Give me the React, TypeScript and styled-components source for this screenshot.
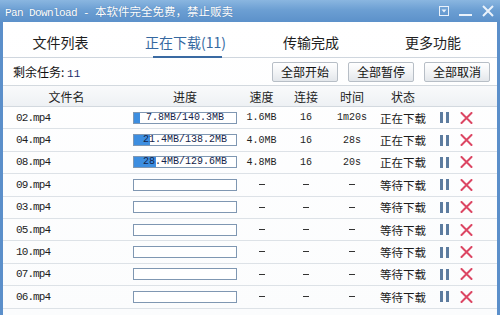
import React from 'react'
import styled, { createGlobalStyle, css } from 'styled-components'

const GlobalStyle = createGlobalStyle`
  html, body {
    margin: 0;
    padding: 0;
    background: #ffffff;
  }
  body {
    font-family: "Noto Sans CJK SC", "Liberation Sans", sans-serif;
  }
`

const CJK = `"Noto Sans CJK SC", "Liberation Sans", sans-serif`
const MONO = `"Liberation Mono", "Noto Sans CJK SC", monospace`

const COLUMNS = '127px 110px 43px 46px 46px 56px 1fr'

const Window = styled.div`
  width: 500px;
  height: 315px;
  display: flex;
  flex-direction: column;
  overflow: hidden;
  background: #ffffff;
`

const TitleBar = styled.div`
  height: 22px;
  flex: none;
  display: flex;
  align-items: center;
  justify-content: space-between;
  padding: 0 6px 0 5px;
  background: linear-gradient(180deg, #8ab6e0 0%, #6c9fd3 45%, #5c91ca 100%);
  color: #ffffff;
`

const TitleText = styled.div`
  font-family: ${MONO};
  font-size: 11px;
  letter-spacing: -0.6px;
  white-space: nowrap;
  text-shadow: 0 0 1px rgba(40, 80, 130, 0.6);
  span {
    font-family: ${CJK};
    font-size: 11.5px;
    letter-spacing: 0;
  }
`

const WindowButtons = styled.div`
  display: flex;
  align-items: center;
  gap: 10px;
`

const Body = styled.div`
  flex: 1;
  display: flex;
  flex-direction: column;
  border-left: 3px solid #5b8fca;
  border-right: 3px solid #5b8fca;
  background: linear-gradient(180deg, #ffffff 0%, #fbfcfd 100%);
`

const TabBar = styled.div`
  height: 35px;
  flex: none;
  display: grid;
  grid-template-columns: 115px 135px 116px 1fr;
  border-bottom: 1px solid #cfd6de;
`

const Tab = styled.div<{ $active?: boolean }>`
  position: relative;
  display: flex;
  align-items: center;
  justify-content: center;
  padding-top: 4px;
  font-family: ${CJK};
  font-size: 14px;
  color: #1e1e1e;
  white-space: nowrap;
  ${(p) =>
    p.$active &&
    css`
      color: #3568a0;
      &::after {
        content: '';
        position: absolute;
        left: 50%;
        bottom: -1px;
        width: 69px;
        margin-left: -33px;
        height: 2px;
        background: #3a6aa2;
      }
    `}
`

const Toolbar = styled.div`
  height: 27px;
  flex: none;
  display: flex;
  align-items: center;
  padding: 0 7px 0 10px;
`

const Remaining = styled.div`
  margin-right: auto;
  font-family: ${CJK};
  font-size: 12px;
  color: #111;
  b {
    font-family: ${MONO};
    font-weight: normal;
    font-size: 11px;
    color: #1d2d6a;
  }
`

const ToolButton = styled.button`
  width: 66px;
  height: 20px;
  margin-left: 10px;
  padding: 0;
  border: 1px solid #b7bec6;
  border-radius: 2px;
  background: linear-gradient(180deg, #ffffff 0%, #f1f3f5 55%, #e3e7eb 100%);
  font-family: ${CJK};
  font-size: 12px;
  color: #111;
  line-height: 18px;
`

const HeaderRow = styled.div`
  height: 22px;
  flex: none;
  display: grid;
  grid-template-columns: ${COLUMNS};
  align-items: center;
  box-sizing: border-box;
  border-top: 1px solid #d3d9df;
  border-bottom: 1px solid #d3d9df;
  background: linear-gradient(180deg, #f9fafb 0%, #eef1f4 100%);
`

const HeaderCell = styled.div`
  text-align: center;
  font-family: ${CJK};
  font-size: 12px;
  color: #1e1e1e;
`

const Row = styled.div`
  height: 22.4px;
  flex: none;
  display: grid;
  grid-template-columns: ${COLUMNS};
  align-items: center;
  box-sizing: border-box;
  border-bottom: 1px solid #dde2e7;
`

const Cell = styled.div<{ $left?: boolean }>`
  text-align: ${(p) => (p.$left ? 'left' : 'center')};
  padding-left: ${(p) => (p.$left ? '13px' : '0')};
  font-family: ${MONO};
  font-size: 10px;
  color: #1e1e1e;
  white-space: nowrap;
`

const FileName = styled(Cell)`
  font-size: 11px;
  letter-spacing: -0.9px;
`

const Dash = styled.span`
  display: inline-block;
  width: 6px;
  height: 1px;
  vertical-align: middle;
  background: #333;
`

const Status = styled.div`
  text-align: center;
  font-family: ${CJK};
  font-size: 11.5px;
  color: #1a1a1a;
  white-space: nowrap;
`

const ProgressWrap = styled.div`
  display: flex;
  justify-content: center;
`

const Progress = styled.div`
  position: relative;
  width: 104px;
  height: 12px;
  box-sizing: border-box;
  border: 1px solid #7f97b2;
  background: #ffffff;
`

const ProgressFill = styled.div`
  height: 100%;
  background: #3d8ee0;
`

const ProgressLabel = styled.div`
  position: absolute;
  inset: 0;
  display: flex;
  align-items: center;
  justify-content: center;
  font-family: ${MONO};
  font-size: 10px;
  color: #14244a;
  line-height: 10px;
`

const Actions = styled.div`
  display: flex;
  align-items: center;
  padding-left: 9px;
  gap: 11px;
`

const PauseIcon = styled.div`
  display: flex;
  gap: 3px;
  span {
    width: 3px;
    height: 11px;
    background: #5d7c9f;
  }
`

type Task = {
  name: string
  done?: number
  total?: number
  speed?: string
  conns?: string
  time?: string
  status: string
}

const tasks: Task[] = [
  { name: '02.mp4', done: 7.8, total: 140.3, speed: '1.6MB', conns: '16', time: '1m20s', status: '正在下载' },
  { name: '04.mp4', done: 21.4, total: 138.2, speed: '4.0MB', conns: '16', time: '28s', status: '正在下载' },
  { name: '08.mp4', done: 28.4, total: 129.6, speed: '4.8MB', conns: '16', time: '20s', status: '正在下载' },
  { name: '09.mp4', status: '等待下载' },
  { name: '03.mp4', status: '等待下载' },
  { name: '05.mp4', status: '等待下载' },
  { name: '10.mp4', status: '等待下载' },
  { name: '07.mp4', status: '等待下载' },
  { name: '06.mp4', status: '等待下载' },
]

const CloseMark = () => (
  <svg width="13" height="12" viewBox="0 0 13 12">
    <path d="M1.5 1 L11.5 11 M11.5 1 L1.5 11" stroke="#dc4663" strokeWidth="2" strokeLinecap="round" />
  </svg>
)

const orDash = (v?: string) => v ?? <Dash />

const App: React.FC = () => {
  return (
    <Window>
      <GlobalStyle />
      <TitleBar>
        <TitleText>
          Pan Download - <span>本软件完全免费，禁止贩卖</span>
        </TitleText>
        <WindowButtons>
          <svg width="10" height="10" viewBox="0 0 10 10">
            <rect x="0.5" y="0.5" width="9" height="9" fill="none" stroke="#eaf2fb" strokeWidth="1" />
            <path d="M2.5 3.5 H7.5 L5 6.5 Z" fill="#eaf2fb" />
          </svg>
          <svg width="13" height="12" viewBox="0 0 13 12">
            <rect x="0" y="9" width="13" height="2" fill="#eaf2fb" />
          </svg>
          <svg width="12" height="12" viewBox="0 0 12 12">
            <path d="M1 1 L11 11 M11 1 L1 11" stroke="#eaf2fb" strokeWidth="2" />
          </svg>
        </WindowButtons>
      </TitleBar>
      <Body>
        <TabBar>
          <Tab>文件列表</Tab>
          <Tab $active>正在下载(11)</Tab>
          <Tab>传输完成</Tab>
          <Tab>更多功能</Tab>
        </TabBar>
        <Toolbar>
          <Remaining>
            剩余任务: <b>11</b>
          </Remaining>
          <ToolButton>全部开始</ToolButton>
          <ToolButton>全部暂停</ToolButton>
          <ToolButton>全部取消</ToolButton>
        </Toolbar>
        <HeaderRow>
          <HeaderCell>文件名</HeaderCell>
          <HeaderCell>进度</HeaderCell>
          <HeaderCell>速度</HeaderCell>
          <HeaderCell>连接</HeaderCell>
          <HeaderCell>时间</HeaderCell>
          <HeaderCell>状态</HeaderCell>
          <HeaderCell />
        </HeaderRow>
        {tasks.map((t) => {
          const pct = t.done && t.total ? (t.done / t.total) * 100 : 0
          return (
            <Row key={t.name}>
              <FileName $left>{t.name}</FileName>
              <ProgressWrap>
                <Progress>
                  <ProgressFill style={{ width: `${pct}%` }} />
                  {t.total ? (
                    <ProgressLabel>
                      {t.done}MB/{t.total}MB
                    </ProgressLabel>
                  ) : null}
                </Progress>
              </ProgressWrap>
              <Cell>{orDash(t.speed)}</Cell>
              <Cell>{orDash(t.conns)}</Cell>
              <Cell>{orDash(t.time)}</Cell>
              <Status>{t.status}</Status>
              <Actions>
                <PauseIcon>
                  <span />
                  <span />
                </PauseIcon>
                <CloseMark />
              </Actions>
            </Row>
          )
        })}
      </Body>
    </Window>
  )
}

export default App
